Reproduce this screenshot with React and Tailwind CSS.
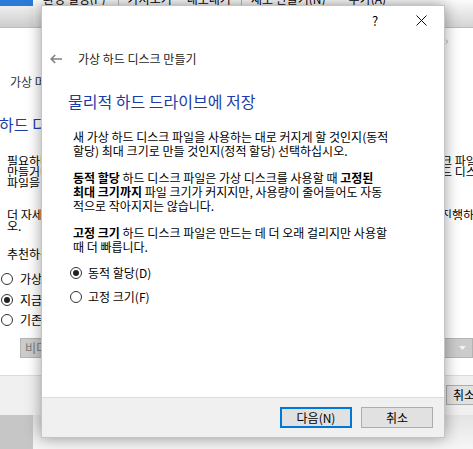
import React from "react";

function Radio({ checked }) {
  return (
    <span className="flex h-[12px] w-[12px] shrink-0 items-center justify-center rounded-full border border-[#333333] bg-white">
      {checked ? <span className="h-[6px] w-[6px] rounded-full bg-[#222222]" /> : null}
    </span>
  );
}

function BgLine({ left, right }) {
  return (
    <div className="flex h-[11px]">
      <span className="w-[41px] shrink-0 overflow-hidden whitespace-nowrap pl-[7px]">{left}</span>
      <span className="w-[404px] shrink-0" />
      <span className="overflow-hidden whitespace-nowrap">
        <span className="-ml-[4px] inline-block">{right}</span>
      </span>
    </div>
  );
}

export default function App() {
  return (
    <div className="relative h-[449px] w-[473px] overflow-hidden bg-white font-['Noto_Sans_CJK_KR','Noto_Sans',sans-serif] text-[12px] text-black">
      {/* main window toolbar (behind) */}
      <div className="flex h-[28px] overflow-hidden border-b border-[#bdbdbd]">
        <div className="flex w-[33px] flex-col">
          <div className="h-[6px] bg-[#2a7bd8]" />
          <div className="flex-1 bg-gradient-to-b from-[#eeeeee] to-[#cdcdcd]" />
        </div>
        <div className="flex flex-1 flex-col bg-gradient-to-b from-[#fbfbfb] to-[#d4d4d4]">
          <div className="-mt-[7px] flex h-[12px] items-start whitespace-nowrap pl-[10px] leading-[12px]">
            <span>환경 설정(P)</span>
            <span className="ml-[12px] mr-[9px] h-[12px] w-px bg-[#b5b5b5]" />
            <span>가져오기</span>
            <span className="ml-[15px]">내보내기</span>
            <span className="ml-[10px] mr-[9px] h-[12px] w-px bg-[#b5b5b5]" />
            <span>새로 만들기(N)</span>
            <span className="ml-[23px]">추가(A)</span>
          </div>
        </div>
      </div>

      {/* wizard window (behind) */}
      <div className="flex flex-col">
        <div className="mt-[6px] h-[12px] pl-[445px] text-[11px] leading-[12px] text-[#a8a8a8]">›</div>
        <div className="mt-[29px] h-[14px] w-[41px] overflow-hidden whitespace-nowrap pl-[10px] leading-[14px] text-[#333333]">가상 머신</div>
        <div className="mt-[25px] h-[20px] w-[41px] overflow-hidden whitespace-nowrap text-[16px] leading-[20px] text-[#1a3ca8]">
          <span className="-ml-[1px] inline-block">하드 디스크</span>
        </div>
        <div className="mt-[21px] flex flex-col leading-[11px]">
          <BgLine left="필요하다면" right="크 파일을" />
          <BgLine left="만들거나" right="드 디스크" />
          <BgLine left="파일을" right="" />
        </div>
        <div className="mt-[21px] flex flex-col leading-[11px]">
          <BgLine left="더 자세한" right="진행하십" />
          <BgLine left="오." right="" />
        </div>
        <div className="mt-[16px] h-[14px] w-[41px] overflow-hidden whitespace-nowrap pl-[7px] leading-[14px]">추천하는</div>
        <div className="mt-[8px] flex h-[20px] w-[41px] items-center gap-[7px] overflow-hidden whitespace-nowrap pl-[1px]">
          <Radio />
          <span>가상</span>
        </div>
        <div className="mt-[1px] flex h-[20px] w-[41px] items-center gap-[7px] overflow-hidden whitespace-nowrap pl-[1px]">
          <Radio checked />
          <span>지금</span>
        </div>
        <div className="flex h-[20px] w-[41px] items-center gap-[7px] overflow-hidden whitespace-nowrap pl-[1px]">
          <Radio />
          <span>기존</span>
        </div>
        <div className="ml-[20px] mt-[8px] flex h-[20px] items-center justify-between border border-[#b4b4b4] bg-[#cccccc] pl-[4px] pr-[6px] text-[#7a7a7a]">
          <span className="w-[17px] overflow-hidden whitespace-nowrap">비디</span>
          <svg width="7" height="4" viewBox="0 0 7 4">
            <path d="M0 0 H7 L3.5 4 Z" fill="#f2f2f2" />
          </svg>
        </div>
        <div className="h-[17px]" />
        <div className="h-[40px] border-t border-[#dcdcdc] bg-[#f0f0f0] pl-[446px] pt-[9px]">
          <div className="flex h-[20px] w-[75px] items-center border border-[#adadad] bg-[#e1e1e1] pl-[6px]">
            취소
          </div>
        </div>
        <div className="flex h-[34px]">
          <div className="w-[33px] bg-[#c6c6c6]" />
          <div className="flex-1 bg-gradient-to-b from-[#e4e4e4] to-[#f6f6f6]" />
        </div>
      </div>

      {/* front dialog */}
      <div className="absolute left-[41px] top-[5px] flex h-[433px] w-[404px] flex-col border border-[#c4c4c4] bg-white shadow-[0_0_14px_rgba(0,0,0,0.38)]">
        <div className="flex h-[29px] items-center justify-end">
          <span className="w-[46px] text-center text-[13px] leading-[16px]">?</span>
          <span className="flex w-[46px] justify-center">
            <svg width="11" height="11" viewBox="0 0 11 11">
              <path d="M0.5 0.5 L10.5 10.5 M10.5 0.5 L0.5 10.5" stroke="#111111" strokeWidth="1" fill="none" />
            </svg>
          </span>
        </div>
        <div className="mt-[14px] flex h-[20px] items-center">
          <svg className="ml-[8px]" width="12" height="10" viewBox="0 0 12 10">
            <path d="M1.2 5 H12 M5.2 1 L1.2 5 L5.2 9" stroke="#808080" strokeWidth="1.6" fill="none" />
          </svg>
          <span className="ml-[16px] whitespace-nowrap text-[#222222]">가상 하드 디스크 만들기</span>
        </div>
        <div className="mt-[21px] h-[22px] whitespace-nowrap pl-[26px] text-[16px] leading-[22px] text-[#1a3ca8]">
          물리적 하드 드라이브에 저장
        </div>
        <div className="mt-[18px] flex flex-col gap-[13px] pl-[31px] leading-[14px]">
          <div>
            <div className="whitespace-nowrap">새 가상 하드 디스크 파일을 사용하는 대로 커지게 할 것인지(동적</div>
            <div className="whitespace-nowrap">할당) 최대 크기로 만들 것인지(정적 할당) 선택하십시오.</div>
          </div>
          <div>
            <div className="whitespace-nowrap">
              <b className="font-bold">동적 할당</b> 하드 디스크 파일은 가상 디스크를 사용할 때 <b className="font-bold">고정된</b>
            </div>
            <div className="whitespace-nowrap">
              <b className="font-bold">최대 크기까지</b> 파일 크기가 커지지만, 사용량이 줄어들어도 자동
            </div>
            <div className="whitespace-nowrap">적으로 작아지지는 않습니다.</div>
          </div>
          <div>
            <div className="whitespace-nowrap">
              <b className="font-bold">고정 크기</b> 하드 디스크 파일은 만드는 데 더 오래 걸리지만 사용할
            </div>
            <div className="whitespace-nowrap">때 더 빠릅니다.</div>
          </div>
        </div>
        <div className="mt-[9px] flex h-[20px] items-center gap-[6px] pl-[28px]">
          <Radio checked />
          <span className="whitespace-nowrap">동적 할당(D)</span>
        </div>
        <div className="mt-[4px] flex h-[20px] items-center gap-[6px] pl-[28px]">
          <Radio />
          <span className="whitespace-nowrap">고정 크기(F)</span>
        </div>
        <div className="flex-1" />
        <div className="flex h-[40px] items-start justify-end gap-[9px] border-t border-[#dcdcdc] bg-[#f0f0f0] pr-[11px] pt-[9px]">
          <div className="flex h-[21px] w-[72px] items-center justify-center border-2 border-[#0078d7] bg-[#e1e1e1]">
            다음(N)
          </div>
          <div className="flex h-[21px] w-[72px] items-center justify-center border border-[#adadad] bg-[#e1e1e1]">
            취소
          </div>
        </div>
      </div>
    </div>
  );
}
